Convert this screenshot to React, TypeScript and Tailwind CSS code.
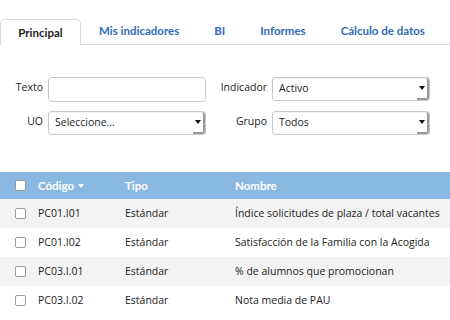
import React from "react";

const Caret = () => (
  <div className="flex h-full w-[12px] items-center justify-center border-r-2 border-b-2 border-[#9a9a9a] rounded-r-[3px]">
    <svg width="6" height="4" viewBox="0 0 6 4"><path d="M0 0H6L3 4Z" fill="#111" /></svg>
  </div>
);

const Select = ({ value }: { value: string }) => (
  <div className="flex h-[24px] w-[158px] items-center justify-between rounded-[3px] border border-[#c8c8c8] bg-white pl-[6px] text-[10.5px] text-[#222] shadow-[inset_0_1px_1px_rgba(0,0,0,0.05)]">
    <span>{value}</span>
    <Caret />
  </div>
);

const Check = () => (
  <div className="h-[11px] w-[11px] rounded-[2px] border border-[#9a9a9a] bg-white" />
);

const rows = [
  ["PC01.I01", "Estándar", "Índice solicitudes de plaza / total vacantes"],
  ["PC01.I02", "Estándar", "Satisfacción de la Familia con la Acogida"],
  ["PC03.I.01", "Estándar", "% de alumnos que promocionan"],
  ["PC03.I.02", "Estándar", "Nota media de PAU"],
];

export default function App() {
  return (
    <div className="h-[320px] w-[450px] overflow-hidden bg-white" style={{ fontFamily: '"Open Sans", sans-serif' }}>
      <div className="flex h-[45px] items-end border-b border-[#d9d9d9] pt-[19px]" style={{ fontFamily: "Lato, sans-serif" }}>
        <div className="-mb-px flex h-[26px] w-[81px] items-center justify-center rounded-t-[5px] border border-b-0 border-[#d9d9d9] bg-white text-[11.5px] font-bold text-[#222]">
          Principal
        </div>
        <div className="flex h-[26px] items-center whitespace-nowrap pl-[18px] text-[11.5px] font-bold text-[#2e6cb8]">
          <span>Mis indicadores</span>
          <span className="ml-[35px]">BI</span>
          <span className="ml-[35px]">Informes</span>
          <span className="ml-[35px]">Cálculo de datos</span>
        </div>
      </div>

      <div className="mt-[32px] grid gap-y-[9px] text-[10.5px] text-[#222]" style={{ gridTemplateColumns: "48px 158px 66px 158px" }}>
        <div className="flex items-center justify-end pr-[5px] pb-[3px]">Texto</div>
        <div className="h-[25px] rounded-[4px] border border-[#c8c8c8] bg-white" />
        <div className="flex items-center justify-end pr-[5px] pb-[3px]">Indicador</div>
        <Select value="Activo" />
        <div className="flex items-center justify-end pr-[5px] pb-[3px]">UO</div>
        <Select value="Seleccione..." />
        <div className="flex items-center justify-end pr-[5px] pb-[3px]">Grupo</div>
        <Select value="Todos" />
      </div>

      <div className="mt-[37px] text-[10.5px] whitespace-nowrap">
        <div className="flex h-[27px] items-center bg-[#89b9e1] text-[11.5px] font-bold text-white" style={{ fontFamily: "Lato, sans-serif" }}>
          <div className="flex w-[38px] shrink-0 justify-center pl-[3px]"><Check /></div>
          <div className="flex w-[87px] shrink-0 items-center gap-[4px]">Código<svg width="6" height="4" viewBox="0 0 6 4"><path d="M0 0H6L3 4Z" fill="#fff" /></svg></div>
          <div className="w-[110px] shrink-0">Tipo</div>
          <div>Nombre</div>
        </div>
        {rows.map((r, i) => (
          <div key={i} className={`flex h-[29px] items-center text-[#222] ${i % 2 === 0 ? "bg-[#f3f3f3]" : "bg-white"}`}>
            <div className="flex w-[38px] shrink-0 justify-center pl-[3px]"><Check /></div>
            <div className="w-[87px] shrink-0">{r[0]}</div>
            <div className="w-[110px] shrink-0">{r[1]}</div>
            <div>{r[2]}</div>
          </div>
        ))}
      </div>
    </div>
  );
}
